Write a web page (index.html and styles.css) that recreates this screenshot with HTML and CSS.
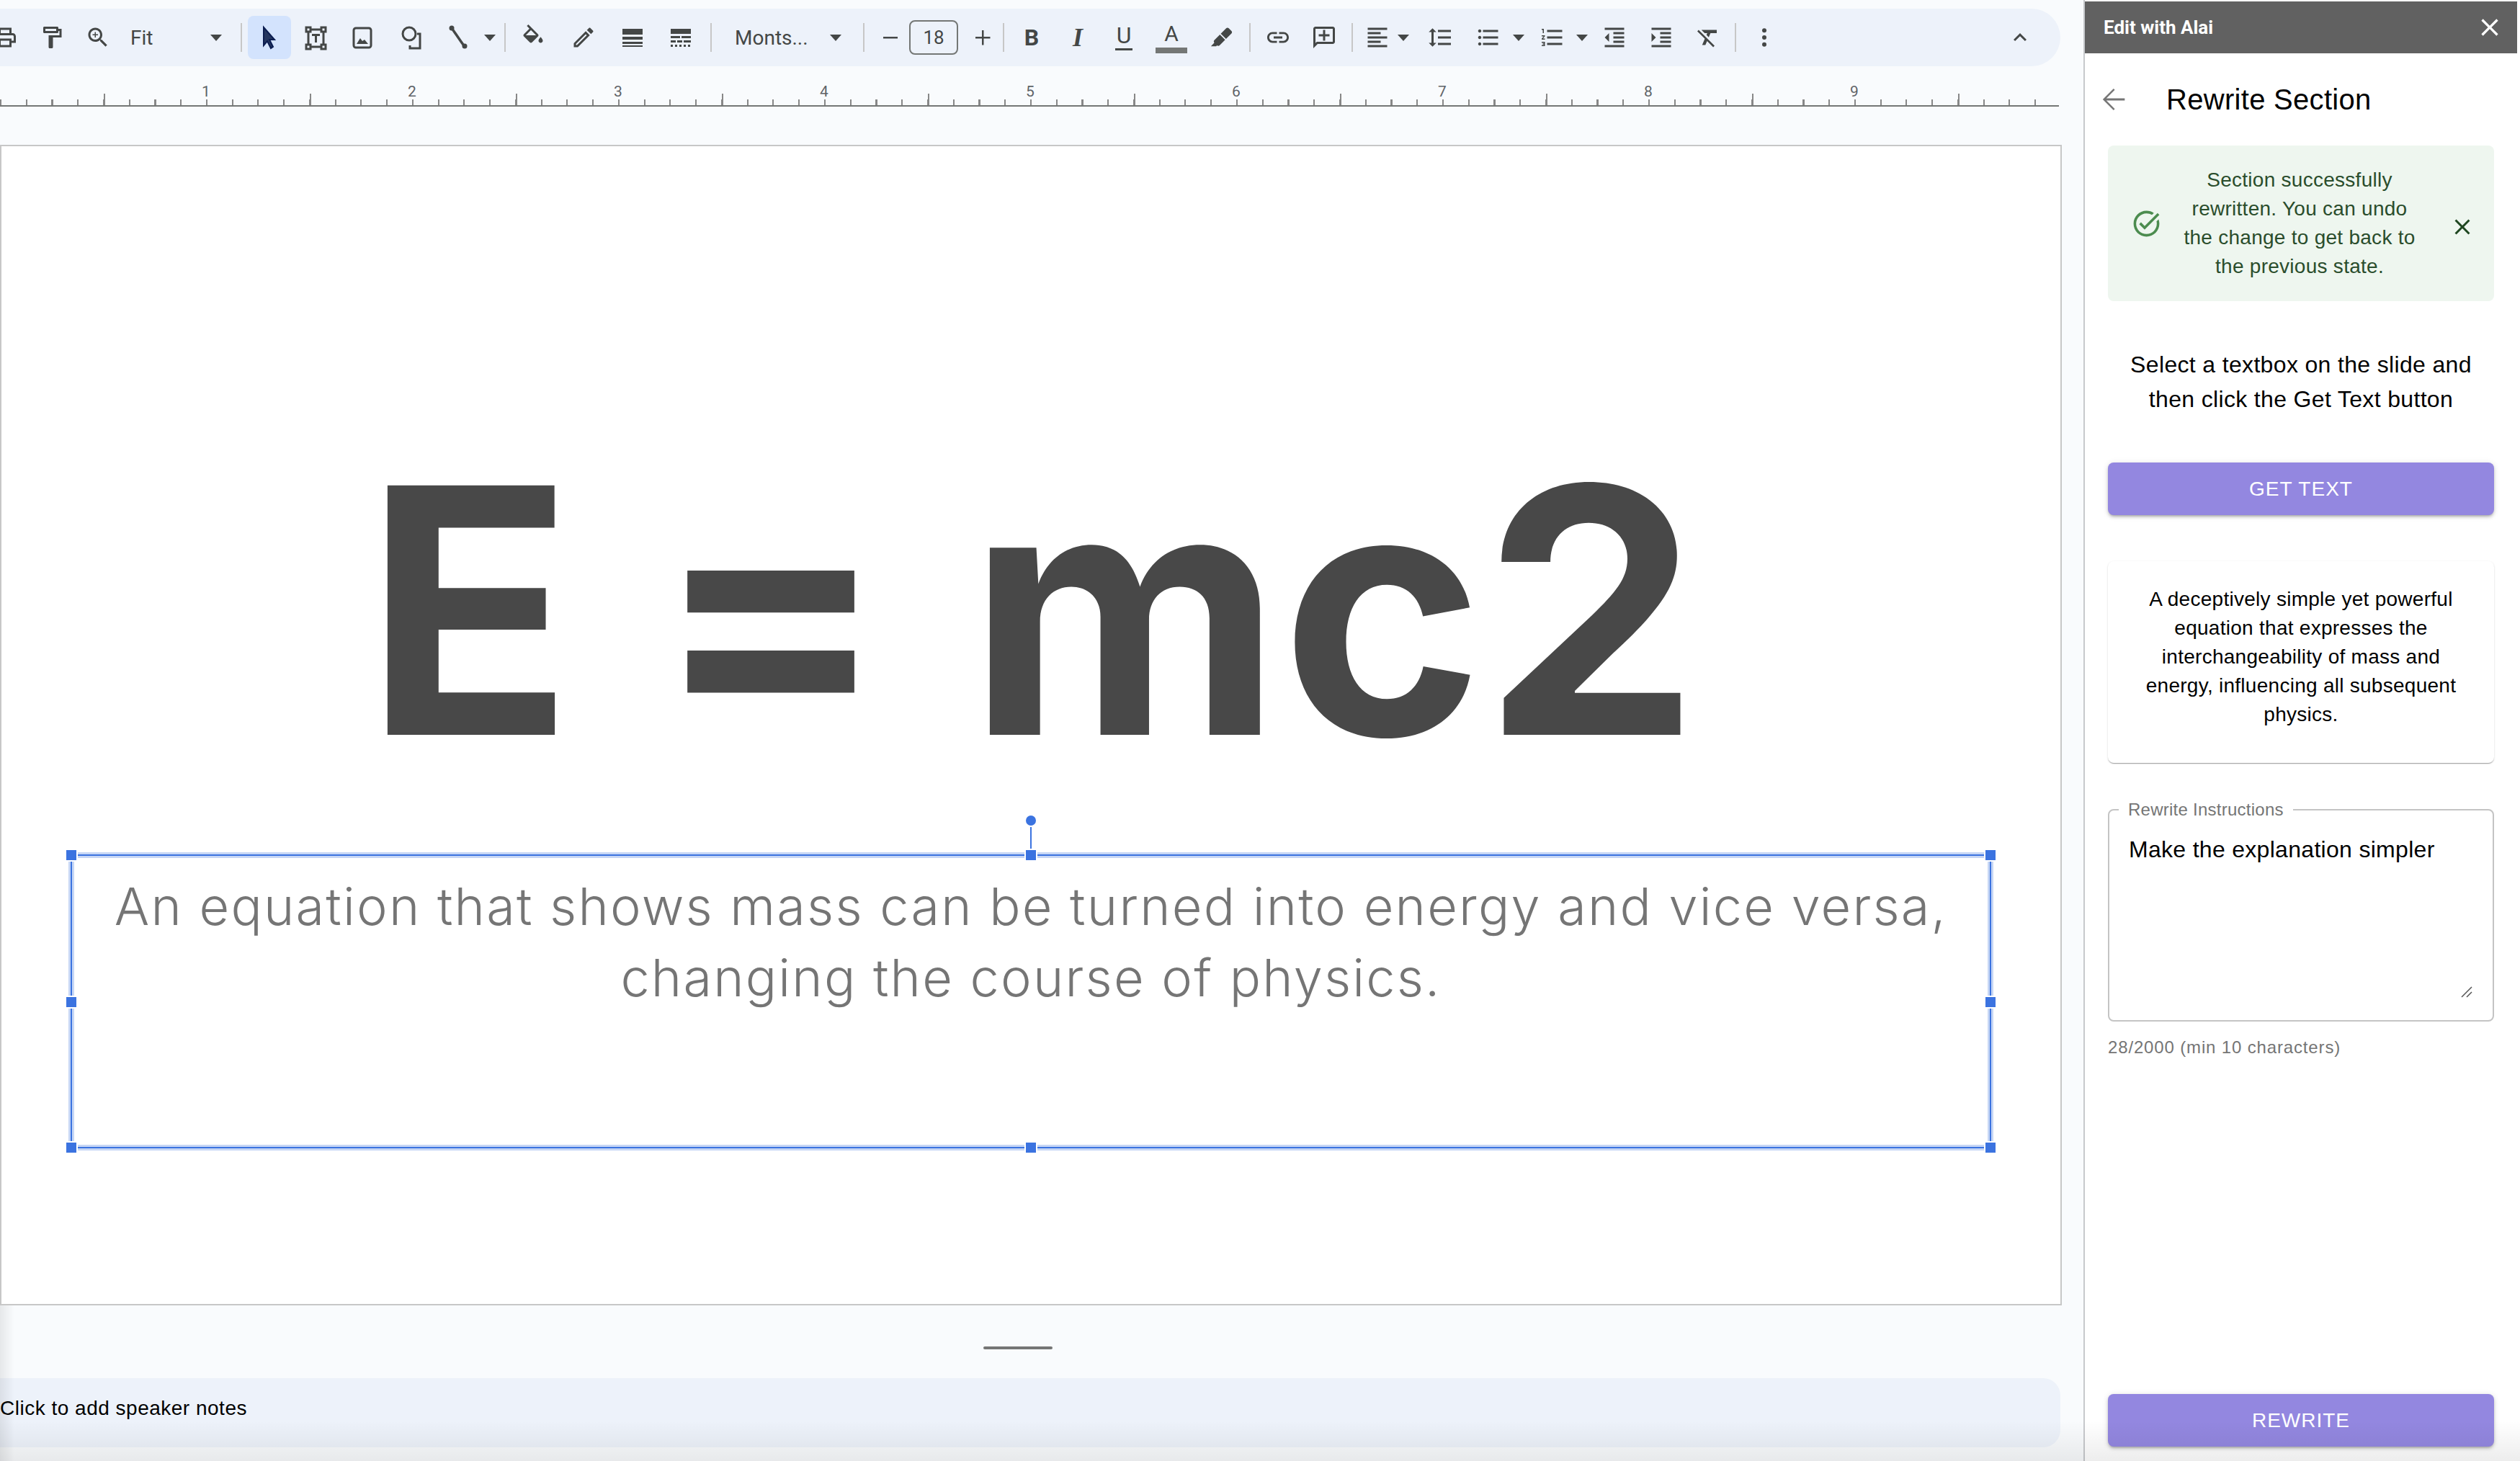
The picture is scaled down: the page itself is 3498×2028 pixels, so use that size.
FILE: index.html
```html
<!DOCTYPE html>
<html lang="en">
<head>
    <meta charset="UTF-8">
    <title>E = mc2 - Slides</title>
    <link rel="stylesheet" href="styles.css">
</head>
<body>
    <div class="main">
        <!-- Toolbar -->
        <div class="toolbar">
            <span class="tool"><svg class="ic" viewBox="0 0 24 24"><path d="M19 8h-1V3H6v5H5c-1.66 0-3 1.34-3 3v6h4v4h12v-4h4v-6c0-1.66-1.34-3-3-3zM8 5h8v3H8V5zm8 14H8v-4h8v4zm2-4v-2H6v2H4v-4c0-.55.45-1 1-1h14c.55 0 1 .45 1 1v4h-2z"/></svg></span>
            <span class="tool"><svg class="ic" viewBox="0 0 24 24"><path d="M18 4V3c0-.55-.45-1-1-1H5c-.55 0-1 .45-1 1v4c0 .55.45 1 1 1h12c.55 0 1-.45 1-1V6h1v4H9v11c0 .55.45 1 1 1h2c.55 0 1-.45 1-1v-9h8V4h-3zm-2 2H6V4h10v2z"/></svg></span>
            <span class="tool"><svg class="ic" viewBox="0 0 24 24"><path d="M15.5 14h-.79l-.28-.27C15.41 12.59 16 11.11 16 9.5 16 5.91 13.09 3 9.5 3S3 5.91 3 9.5 5.91 16 9.5 16c1.61 0 3.09-.59 4.23-1.57l.27.28v.79l5 4.99L20.49 19l-4.99-5zm-6 0C7.01 14 5 11.99 5 9.5S7.01 5 9.5 5 14 7.01 14 9.5 11.99 14 9.5 14zM12 10h-2v2H9v-2H7V9h2V7h1v2h2v1z"/></svg></span>
            <span class="select fit">Fit<i class="caret"></i></span>
            <i class="sep"></i>
            <span class="tool active"><svg class="ic" viewBox="0 0 36 36"><path class="cursor" d="M10 4v25l5-6 5 10 3-2-5-10h7z"/></svg></span>
            <span class="tool"><svg class="ic" viewBox="0 0 36 36"><g class="line-ic"><rect x="5" y="4" width="6" height="6"/><rect x="26" y="4" width="6" height="6"/><rect x="5" y="28" width="6" height="6"/><rect x="26" y="28" width="6" height="6"/><path d="M11 7h15M11 31h15M8 10v18M29 10v18"/></g><path d="M13 13h11v3h-4v9h-3v-9h-4z"/></svg></span>
            <span class="tool"><svg class="ic" viewBox="0 0 36 36"><rect class="line-ic" x="6" y="5" width="24" height="27" rx="3"/><path d="M10 27l5-8 3 4 3-2 5 6z"/></svg></span>
            <span class="tool"><svg class="ic" viewBox="0 0 36 36"><circle class="line-ic" cx="14" cy="13" r="9"/><path class="line-ic" d="M25 13h4v20H15v-4"/></svg></span>
            <span class="tool"><svg class="ic" viewBox="0 0 36 36"><path class="line-thick" d="M8 5l18 26"/><circle cx="8" cy="5" r="3.5"/><circle cx="26" cy="30" r="3.5"/></svg></span>
            <span class="tool"><i class="caret"></i></span>
            <i class="sep"></i>
            <span class="tool"><svg class="ic" viewBox="0 0 24 24"><path d="M16.56 8.94L7.62 0 6.21 1.41l2.38 2.38-5.15 5.15c-.59.59-.59 1.54 0 2.12l5.5 5.5c.29.29.68.44 1.06.44s.77-.15 1.06-.44l5.5-5.5c.59-.58.59-1.53 0-2.12zM5.21 10L10 5.21 14.79 10H5.21zM19 11.5s-2 2.17-2 3.5c0 1.1.9 2 2 2s2-.9 2-2c0-1.33-2-3.5-2-3.5z"/></svg></span>
            <span class="tool"><svg class="ic" viewBox="0 0 24 24"><path d="M3 17.25V21h3.75L17.81 9.94l-3.75-3.75L3 17.25zM5.92 19H5v-.92l9.06-9.06.92.92L5.92 19zM20.71 5.63l-2.34-2.34c-.39-.39-1.02-.39-1.41 0l-1.83 1.83 3.75 3.75 1.83-1.83c.39-.39.39-1.02 0-1.41z"/></svg></span>
            <span class="tool"><svg class="ic" viewBox="0 0 36 36"><path d="M4 6h28v8H4zM4 17h28v4H4zM4 24h28v3H4zM4 29h28v2H4z"/></svg></span>
            <span class="tool"><svg class="ic" viewBox="0 0 36 36"><path d="M4 6h28v7H4zM4 16h13v3H4zM19 16h13v3H19zM4 22h7v3H4zM13 22h7v3h-7zM22 22h10v3H22zM4 28h3v3H4zM10 28h3v3h-3zM16 28h3v3h-3zM22 28h3v3h-3zM28 28h3v3h-3z"/></svg></span>
            <i class="sep"></i>
            <span class="select font">Monts...<i class="caret"></i></span>
            <i class="sep"></i>
            <span class="tool"><svg class="ic" viewBox="0 0 36 36"><path d="M8 17h20v2.500H8z"/></svg></span>
            <span class="size-box">18</span>
            <span class="tool tool-plus"><svg class="ic" viewBox="0 0 36 36"><path d="M8 17h9V8h2.500v9h9v2.500h-9v9H17v-9H8z"/></svg></span>
            <i class="sep"></i>
            <span class="tool letter bold">B</span>
            <span class="tool letter ital">I</span>
            <span class="tool letter under">U</span>
            <span class="tool letter color">A</span>
            <span class="tool tool-ink"><svg class="ic ic-sm" viewBox="0 0 24 24"><path d="M18.500 1.150c-.53 0-1.040.19-1.430.58l-5.810 5.820 5.650 5.650 5.820-5.810c.77-.78.78-2.040 0-2.830l-2.840-2.830c-.39-.39-.89-.58-1.390-.58zM10.300 8.500l-5.960 5.960c-.78.78-.78 2.040.02 2.850C3.140 18.540 1.900 19.770.67 21h5.660l.86-.86c.78.76 2.030.75 2.810-.02l5.950-5.960-5.650-5.660z"/></svg></span>
            <i class="sep"></i>
            <span class="tool"><svg class="ic" viewBox="0 0 24 24"><path d="M3.900 12c0-1.710 1.390-3.100 3.100-3.100h4V7H7c-2.760 0-5 2.240-5 5s2.240 5 5 5h4v-1.900H7c-1.710 0-3.100-1.390-3.100-3.100zM8 13h8v-2H8v2zm9-6h-4v1.900h4c1.710 0 3.100 1.390 3.100 3.100s-1.390 3.100-3.100 3.100h-4V17h4c2.760 0 5-2.240 5-5s-2.240-5-5-5z"/></svg></span>
            <span class="tool"><svg class="ic" viewBox="0 0 24 24"><path d="M20 2H4c-1.100 0-2 .9-2 2v18l4-4h14c1.100 0 2-.9 2-2V4c0-1.100-.9-2-2-2zm0 14H5.170L4 17.170V4h16v12zM13 5h-2v4H7v2h4v4h2v-4h4V9h-4z"/></svg></span>
            <i class="sep"></i>
            <span class="tool"><svg class="ic" viewBox="0 0 24 24"><path d="M15 15H3v2h12v-2zm0-8H3v2h12V7zM3 13h18v-2H3v2zm0 8h18v-2H3v2zM3 3v2h18V3H3z"/></svg></span>
            <span class="tool"><i class="caret"></i></span>
            <span class="tool"><svg class="ic" viewBox="0 0 24 24"><path d="M6 7h2.500L5 3.500 1.500 7H4v10H1.500L5 20.500 8.500 17H6V7zm4-2v2h12V5H10zm0 14h12v-2H10v2zm0-6h12v-2H10v2z"/></svg></span>
            <span class="tool"><svg class="ic" viewBox="0 0 24 24"><path d="M4 10.500c-.83 0-1.500.67-1.500 1.500s.67 1.500 1.500 1.500 1.500-.67 1.500-1.500-.67-1.500-1.500-1.500zm0-6c-.83 0-1.500.67-1.500 1.500S3.170 7.500 4 7.500 5.500 6.830 5.500 6 4.830 4.500 4 4.500zm0 12c-.83 0-1.500.68-1.500 1.500s.68 1.500 1.500 1.500 1.500-.68 1.500-1.500-.67-1.500-1.500-1.500zM7 19h14v-2H7v2zm0-6h14v-2H7v2zm0-8v2h14V5H7z"/></svg></span>
            <span class="tool"><i class="caret"></i></span>
            <span class="tool"><svg class="ic" viewBox="0 0 24 24"><path d="M2 17h2v.5H3v1h1v.5H2v1h3v-4H2v1zm1-9h1V4H2v1h1v3zm-1 3h1.800L2 13.100v.9h3v-1H3.200L5 10.900V10H2v1zm5-6v2h14V5H7zm0 14h14v-2H7v2zm0-6h14v-2H7v2z"/></svg></span>
            <span class="tool"><i class="caret"></i></span>
            <span class="tool"><svg class="ic" viewBox="0 0 24 24"><path d="M11 17h10v-2H11v2zm-8-5l4 4V8l-4 4zm0 9h18v-2H3v2zM3 3v2h18V3H3zm8 6h10V7H11v2zm0 4h10v-2H11v2z"/></svg></span>
            <span class="tool"><svg class="ic" viewBox="0 0 24 24"><path d="M3 21h18v-2H3v2zM3 8v8l4-4-4-4zm8 9h10v-2H11v2zM3 3v2h18V3H3zm8 6h10V7H11v2zm0 4h10v-2H11v2z"/></svg></span>
            <span class="tool"><svg class="ic" viewBox="0 0 24 24"><path d="M3.270 5L2 6.270l6.970 6.970L6.500 19h3l1.570-3.660L16.730 21 18 19.730 3.550 5.270 3.270 5zM6 5v.18L8.820 8h2.400l-.72 1.680 2.100 2.100L14.210 8H20V5H6z"/></svg></span>
            <i class="sep"></i>
            <span class="tool"><svg class="ic" viewBox="0 0 24 24"><circle cx="12" cy="5.500" r="2"/><circle cx="12" cy="12" r="2"/><circle cx="12" cy="18.500" r="2"/></svg></span>
            <span></span>
            <span class="tool"><svg class="ic" viewBox="0 0 24 24"><path d="M12 8l-6 6 1.410 1.410L12 10.830l4.590 4.580L18 14z"/></svg></span>
        </div>

        <!-- Regla -->
        <div class="ruler">
            <span>1</span><span>2</span><span>3</span><span>4</span><span>5</span><span>6</span><span>7</span><span>8</span><span>9</span>
        </div>

        <!-- Diapositiva -->
        <div class="slide">
            <div class="slide-title">E <span class="eq">=</span> mc2</div>
            <div class="selection">
                <p class="slide-sub">An equation that shows mass can be turned into energy and vice versa, changing the course of physics.</p>
                <i class="handle tl"></i><i class="handle tc"></i><i class="handle tr"></i>
                <i class="handle ml"></i><i class="handle mr"></i>
                <i class="handle bl"></i><i class="handle bc"></i><i class="handle br"></i>
                <i class="rotate-line"></i><i class="rotate-dot"></i>
            </div>
        </div>

        <div class="notes-handle"><i></i></div>
        <div class="notes">Click to add speaker notes</div>
    </div>

    <!-- Panel lateral -->
    <div class="side">
        <div class="side-header">
            <span>Edit with Alai</span>
            <svg class="side-close" viewBox="0 0 24 24"><path d="M19 6.410 17.590 5 12 10.590 6.410 5 5 6.410 10.590 12 5 17.590 6.410 19 12 13.410 17.590 19 19 17.590 13.410 12z"/></svg>
        </div>
        <div class="side-body">
            <div class="title-row">
                <svg class="back" viewBox="0 0 24 24"><path d="M20 11.200H6.700l6.100-6.100-.9-.9L4.100 12l7.800 7.800.9-.9-6.100-6.100H20z"/></svg>
                <h2>Rewrite Section</h2>
            </div>
            <div class="alert">
                <svg class="alert-icon" viewBox="0 0 24 24"><path d="M22 5.180 10.590 16.600l-4.240-4.240 1.410-1.410 2.830 2.830 10-10L22 5.180zm-2.210 5.040c.13.57.21 1.170.21 1.780 0 4.420-3.580 8-8 8s-8-3.580-8-8 3.580-8 8-8c1.580 0 3.040.46 4.280 1.220l1.440-1.440C16.100 2.670 14.130 2 12 2 6.480 2 2 6.480 2 12s4.480 10 10 10 10-4.480 10-10c0-1.190-.22-2.330-.6-3.390l-1.610 1.610z"/></svg>
                <div class="alert-text">Section successfully<br>rewritten. You can undo<br>the change to get back to<br>the previous state.</div>
                <svg class="alert-close" viewBox="0 0 24 24"><path d="M19 6.410 17.590 5 12 10.590 6.410 5 5 6.410 10.590 12 5 17.590 6.410 19 12 13.410 17.590 19 19 17.590 13.410 12z"/></svg>
            </div>
            <p class="hint">Select a textbox on the slide and<br>then click the Get Text button</p>
            <button class="btn btn-get">GET TEXT</button>
            <div class="card">A deceptively simple yet powerful<br>equation that expresses the<br>interchangeability of mass and<br>energy, influencing all subsequent<br>physics.</div>
            <fieldset class="field">
                <legend>Rewrite Instructions</legend>
                <div class="field-text">Make the explanation simpler<svg class="grip" viewBox="0 0 16 16"><path d="M1 15L15 1M8 15l7-7"/></svg></div>
            </fieldset>
            <div class="count">28/2000 (min 10 characters)</div>
            <button class="btn btn-rewrite">REWRITE</button>
        </div>
    </div>

    <div class="bottom-shade"></div>
    <div class="left-shade"></div>
</body>
</html>
```

FILE: styles.css
```css
/* General */
* {
    box-sizing: border-box;
}
html, body {
    height: 100%;
}
body {
    margin: 0;
    width: 3498px;
    height: 2028px;
    overflow: hidden;
    display: flex;
    position: relative;
    background-color: #f9fbfd;
    font-family: "Liberation Sans", Arial, sans-serif;
    color: #000;
}
.main {
    width: 2892px;
    flex: none;
    display: flex;
    flex-direction: column;
}

/* Toolbar */
.toolbar {
    width: 2860px;
    height: 80px;
    margin-top: 12px;
    background-color: #edf2fa;
    border-radius: 0 40px 40px 0;
    overflow: hidden;
    padding-right: 24px;
    display: grid;
    align-items: center;
    justify-items: center;
    grid-template-columns: 40px 64px 64px 157px 19px 60px 68px 62px 76px 54px 32px 10px 68px 72px 64px 70px 14px 195px 20px 53px 68px 62px 2px 76px 52px 76px 56px 76px 10px 68px 60px 18px 52px 20px 82px 52px 32px 62px 20px 70px 60px 70px 6px 74px 1fr 64px;
}
.tool {
    display: flex;
    align-items: center;
    justify-content: center;
    color: #444746;
}
.toolbar > .tool:first-child {
    justify-self: start;
    overflow: hidden;
    width: 25px;
    justify-content: flex-end;
}
.tool-plus {
    margin-left: 6px;
}
.tool-ink {
    margin-left: 6px;
}
.ic {
    width: 36px;
    height: 36px;
    flex: none;
    fill: #444746;
}
.ic-sm {
    width: 31px;
    height: 31px;
}
.line-ic {
    fill: none;
    stroke: #444746;
    stroke-width: 3;
}
.line-thick {
    fill: none;
    stroke: #444746;
    stroke-width: 3.500;
}
.cursor {
    fill: #24365f;
    stroke: #0b1d51;
    stroke-width: 2;
}
.active {
    width: 60px;
    height: 60px;
    background-color: #d3e3fd;
    border-radius: 8px;
}
.sep {
    width: 2px;
    height: 40px;
    background-color: #c7c7c7;
}
.caret {
    display: block;
    width: 0;
    height: 0;
    border-left: 8px solid transparent;
    border-right: 8px solid transparent;
    border-top: 9px solid #444746;
}
.select {
    justify-self: stretch;
    display: flex;
    align-items: center;
    font-size: 28px;
    color: #444746;
    font-family: Roboto, Arial, sans-serif;
}
.select .caret {
    position: absolute;
}
.fit {
    padding-left: 13px;
}
.fit .caret {
    left: 292px;
}
.font {
    padding-left: 26px;
}
.font .caret {
    left: 1152px;
}
.size-box {
    width: 68px;
    height: 48px;
    border: 2px solid #747775;
    border-radius: 8px;
    display: flex;
    align-items: center;
    justify-content: center;
    font-family: Roboto, Arial, sans-serif;
    font-size: 26px;
    color: #444746;
}
.letter {
    font-size: 32px;
    line-height: 36px;
    font-family: Roboto, Arial, sans-serif;
}
.bold {
    font-weight: 700;
}
.ital {
    font-family: "Liberation Serif", serif;
    font-style: italic;
    font-weight: 700;
    font-size: 36px;
}
.under {
    height: 36px;
    border-bottom: 3px solid #444746;
    align-items: flex-start;
    padding: 0 2px;
    line-height: 30px;
}
.color {
    width: 44px;
    height: 44px;
    border-bottom: 8px solid #747775;
    align-items: flex-start;
    line-height: 34px;
    font-size: 30px;
}

/* Ruler */
.ruler {
    width: 2858px;
    height: 56px;
    padding-left: 143px;
    display: flex;
    background-image:
        linear-gradient(#747775, #747775),
        repeating-linear-gradient(90deg, #888 0 2px, transparent 2px 286px),
        repeating-linear-gradient(90deg, #888 0 2px, transparent 2px 35.75px);
    background-repeat: no-repeat;
    background-size: 100% 3px, 100% 16px, 100% 8px;
    background-position: 0 54px, 144px 38px, 0 46px;
}
.ruler span {
    width: 286px;
    text-align: center;
    padding-top: 23px;
    font-size: 21px;
    line-height: 24px;
    color: #5f6368;
    font-family: Roboto, Arial, sans-serif;
}

/* Slide */
.slide {
    width: 2862px;
    height: 1611px;
    margin-top: 53px;
    background-color: #fff;
    border: 2px solid #c7c7c7;
    position: relative;
}
.slide-title {
    position: absolute;
    left: 3px;
    right: 0;
    top: 359px;
    text-align: center;
    font-family: Inter, sans-serif;
    font-weight: 700;
    font-size: 476px;
    line-height: 560px;
    color: #484848;
    white-space: pre;
}
.eq {
    vertical-align: 5px;
}
.selection {
    position: absolute;
    left: 96px;
    top: 983px;
    width: 2666px;
    height: 408px;
    border: 2px solid #3b73e0;
    box-shadow: 0 0 0 3px #c6d6f5, inset 0 0 0 3px #c6d6f5;
}
.slide-sub {
    margin: 0;
    padding: 20px 40px 0;
    text-align: center;
    font-family: Inter, sans-serif;
    font-weight: 300;
    font-size: 72px;
    letter-spacing: 2.2px;
    line-height: 99px;
    color: #757575;
}
.handle {
    position: absolute;
    width: 14px;
    height: 14px;
    background-color: #3b73e0;
    outline: 2px solid #fff;
}
.tl { left: -8px; top: -8px; }
.tc { left: 1324px; top: -8px; }
.tr { right: -8px; top: -8px; }
.ml { left: -8px; top: 196px; }
.mr { right: -8px; top: 196px; }
.bl { left: -8px; bottom: -8px; }
.bc { left: 1324px; bottom: -8px; }
.br { right: -8px; bottom: -8px; }
.rotate-line {
    position: absolute;
    left: 1330px;
    top: -40px;
    width: 2px;
    height: 30px;
    background-color: #3b73e0;
}
.rotate-dot {
    position: absolute;
    left: 1324px;
    top: -56px;
    width: 14px;
    height: 14px;
    border-radius: 50%;
    background-color: #3b73e0;
}

/* Notes */
.notes-handle {
    height: 101px;
    display: flex;
    align-items: center;
    padding-left: 1365px;
    padding-top: 16px;
}
.notes-handle i {
    width: 96px;
    height: 4px;
    background-color: #757575;
    border-radius: 2px;
}
.notes {
    width: 2860px;
    height: 96px;
    background-color: #edf2fa;
    border-radius: 0 24px 24px 0;
    font-size: 28px;
    letter-spacing: 0.5px;
    line-height: 84px;
}

/* Side panel */
.side {
    width: 606px;
    flex: none;
    height: 2028px;
    background-color: #fff;
    border-left: 2px solid #c7c9cc;
    padding-top: 2px;
    display: flex;
    flex-direction: column;
}
.side-header {
    width: 600px;
    height: 72px;
    background-color: #616161;
    color: #fff;
    font-family: Roboto, Arial, sans-serif;
    font-weight: 700;
    font-size: 26px;
    padding: 0 18px 0 26px;
    display: flex;
    align-items: center;
    justify-content: space-between;
}
.side-close {
    width: 40px;
    height: 40px;
    fill: #fff;
}
.side-body {
    width: 600px;
    flex: 1;
    padding: 0 32px 20px;
    display: flex;
    flex-direction: column;
}
.title-row {
    height: 128px;
    flex: none;
    display: flex;
    align-items: center;
    margin-left: -15px;
    gap: 50px;
}
.title-row h2 {
    margin: 0;
    font-size: 40px;
    letter-spacing: 0.3px;
    font-weight: 400;
}
.back {
    width: 46px;
    height: 46px;
    fill: #757575;
}
.alert {
    height: 216px;
    flex: none;
    background-color: #eef6ef;
    border-radius: 8px;
    padding: 0 26px 0 32px;
    display: flex;
    align-items: center;
}
.alert-icon {
    width: 43px;
    height: 43px;
    flex: none;
    fill: #4c8c4f;
}
.alert-text {
    flex: 1;
    margin-right: 17px;
    text-align: center;
    font-size: 28px;
    letter-spacing: 0.27px;
    line-height: 40px;
    color: #2a4d2c;
}
.alert-close {
    width: 36px;
    height: 36px;
    flex: none;
    fill: #1e4620;
    margin-top: 10px;
}
.hint {
    margin: 64px 0 64px;
    text-align: center;
    font-size: 32px;
    letter-spacing: 0.34px;
    line-height: 48px;
}
.btn {
    flex: none;
    width: 100%;
    height: 73px;
    border: none;
    border-radius: 8px;
    background-color: #9387e0;
    color: #fff;
    font-family: "Liberation Sans", Arial, sans-serif;
    font-size: 28px;
    letter-spacing: 1px;
    box-shadow: 0 3px 3px -2px rgba(0, 0, 0, 0.2), 0 3px 4px rgba(0, 0, 0, 0.14), 0 1px 8px rgba(0, 0, 0, 0.12);
}
.card {
    flex: none;
    height: 280px;
    margin-top: 64px;
    border-radius: 8px;
    background-color: #fff;
    box-shadow: 0 2px 1px -1px rgba(0, 0, 0, 0.2), 0 1px 1px rgba(0, 0, 0, 0.14), 0 1px 3px rgba(0, 0, 0, 0.12);
    padding-top: 33px;
    text-align: center;
    font-size: 28px;
    letter-spacing: 0.27px;
    line-height: 40px;
}
.field {
    flex: none;
    height: 304px;
    margin: 55px 0 0;
    padding: 25px 26px 0 13px;
    border: 2px solid #c4c4c4;
    border-radius: 8px;
}
.field legend {
    padding: 0 13px;
    font-size: 24px;
    letter-spacing: 0.25px;
    line-height: 20px;
    color: #757575;
}
.field-text {
    position: relative;
    height: 226px;
    padding-left: 14px;
    font-size: 32px;
    letter-spacing: 0.3px;
    line-height: 40px;
}
.grip {
    position: absolute;
    right: 2px;
    bottom: 0;
    width: 16px;
    height: 16px;
    fill: none;
    stroke: #555;
    stroke-width: 1.500;
}
.count {
    margin-top: 22px;
    font-size: 24px;
    line-height: 28px;
    color: #757575;
    letter-spacing: 0.85px;
}
.btn-rewrite {
    margin-top: auto;
}

/* Sombras del borde */
.bottom-shade {
    position: absolute;
    left: 0;
    right: 0;
    bottom: 0;
    height: 56px;
    background-image: linear-gradient(rgba(0, 0, 0, 0), rgba(0, 0, 0, 0.07));
    pointer-events: none;
}
.left-shade {
    position: absolute;
    left: 0;
    top: 1812px;
    bottom: 0;
    width: 20px;
    background-image: linear-gradient(90deg, rgba(0, 0, 0, 0.08), rgba(0, 0, 0, 0));
    pointer-events: none;
}
```
